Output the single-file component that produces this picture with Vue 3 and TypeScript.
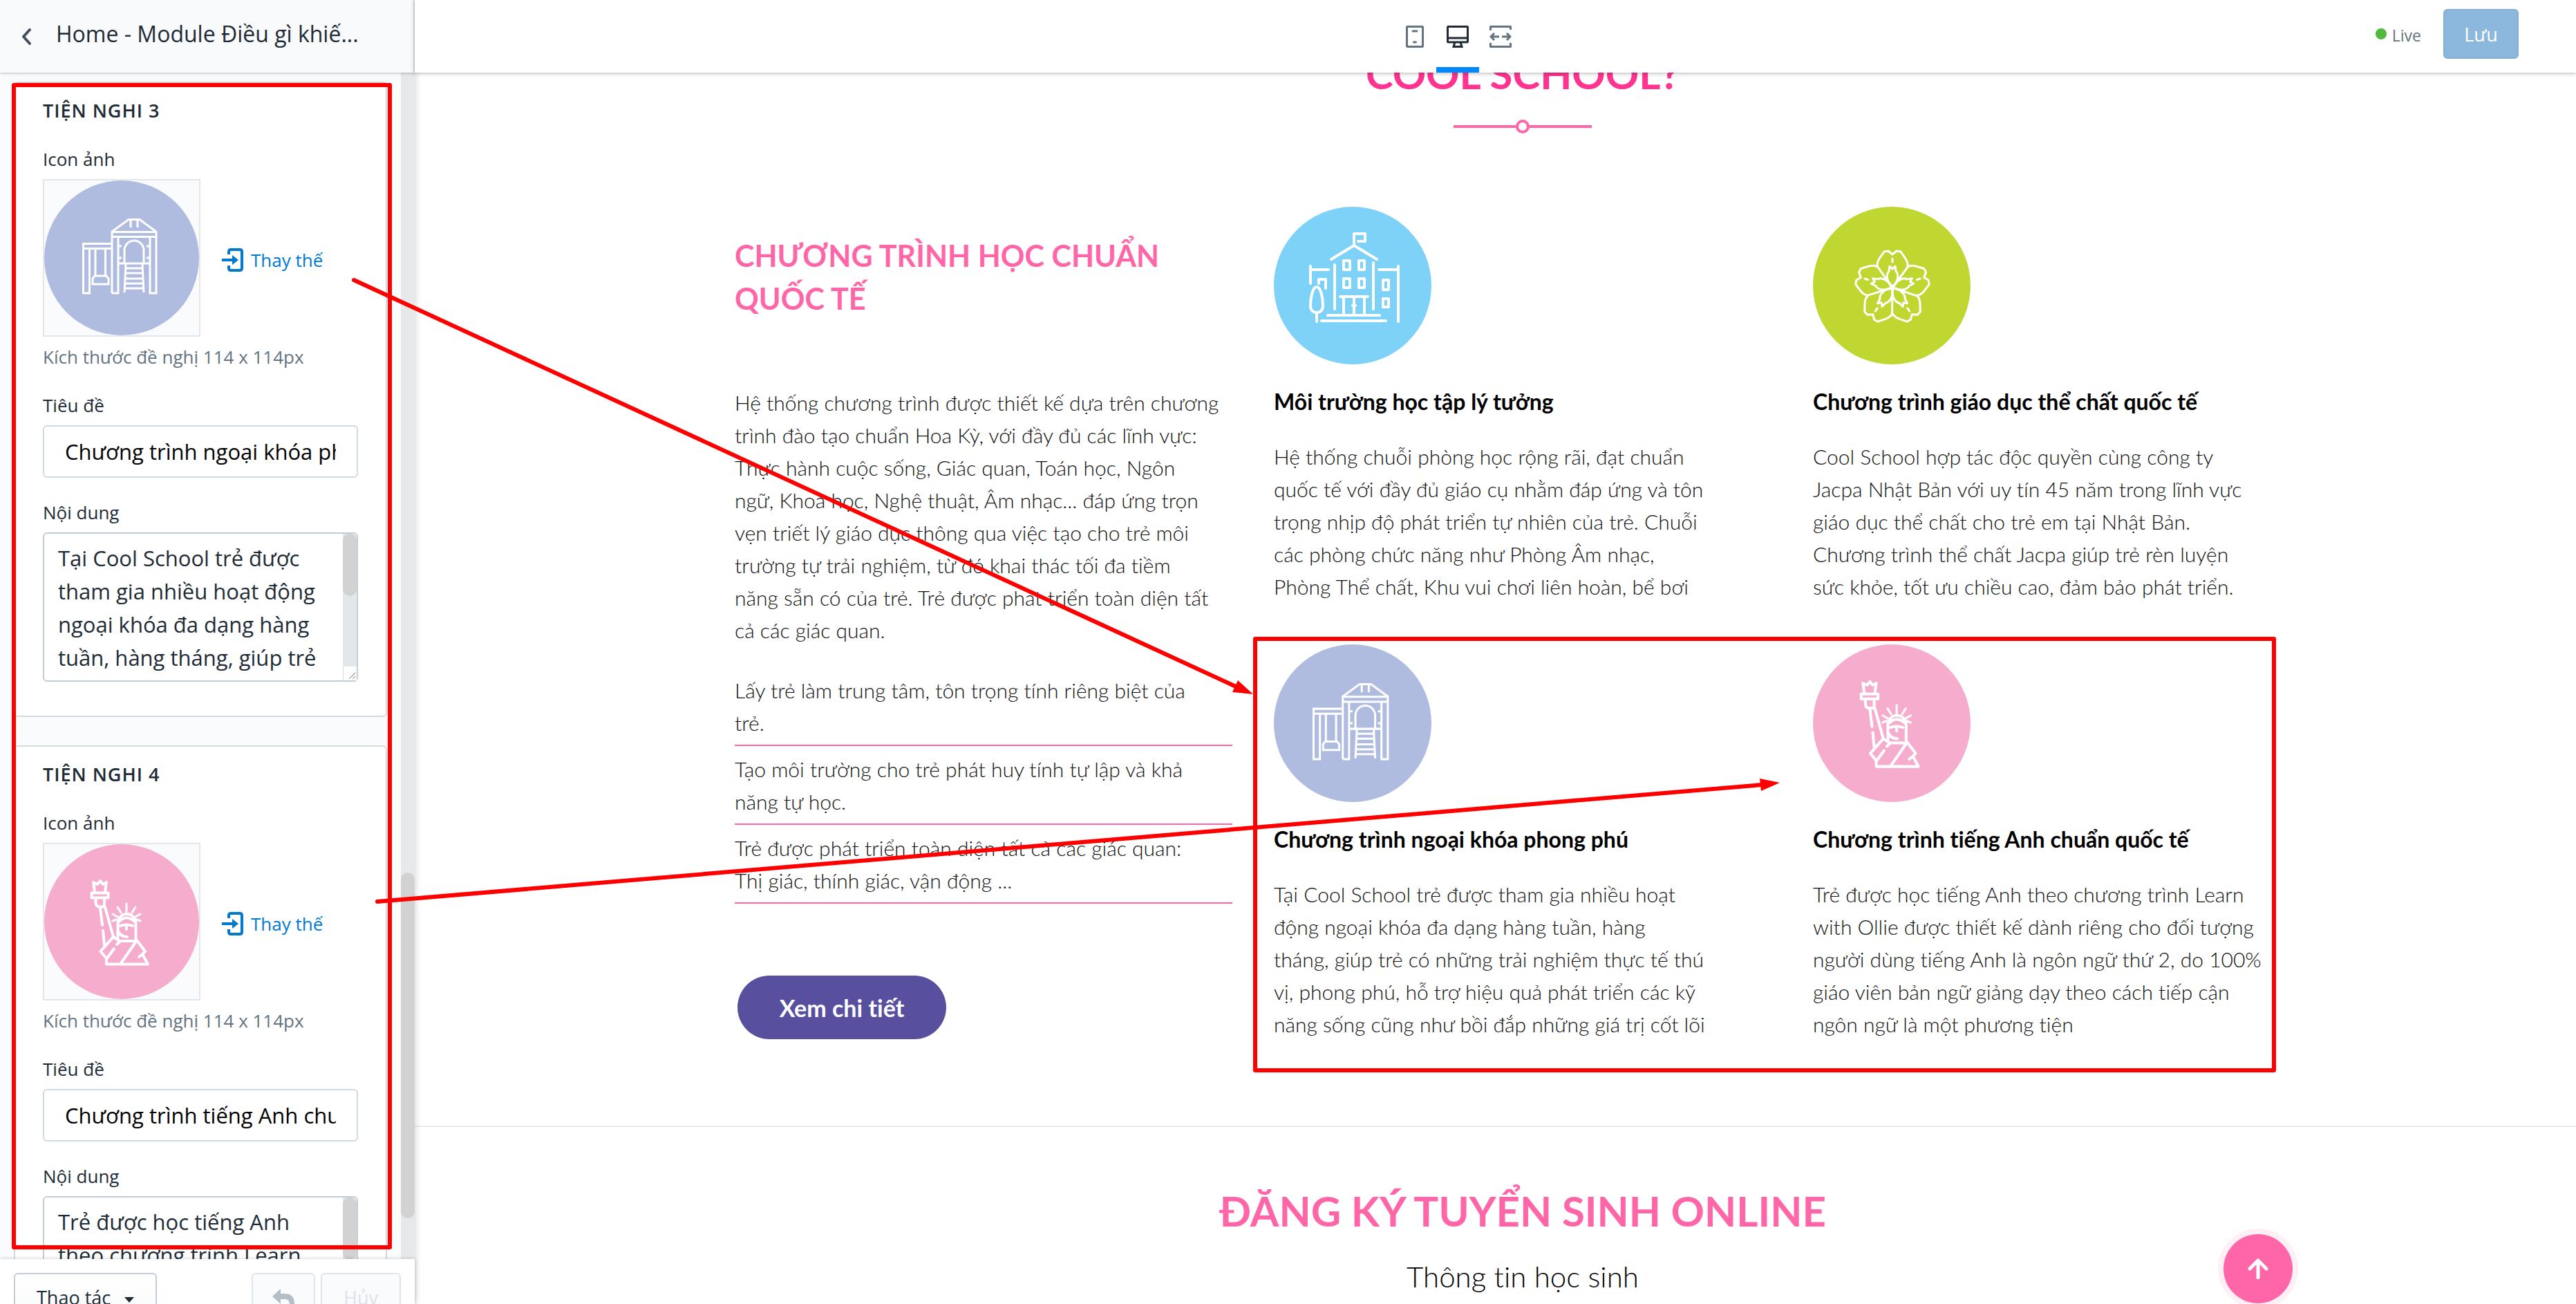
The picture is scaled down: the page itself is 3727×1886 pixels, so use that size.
<script setup lang="ts">
import { ref } from 'vue'

interface Amenity {
  id: number
  heading: string
  icon: string
  title: string
  content: string
}

interface Feature {
  icon: string
  title: string
  text: string
}

const amenities = ref<Amenity[]>([
  {
    id: 3,
    heading: 'TIỆN NGHI 3',
    icon: 'playground',
    title: 'Chương trình ngoại khóa phong phú',
    content:
      'Tại Cool School trẻ được\ntham gia nhiều hoạt động\nngoại khóa đa dạng hàng\ntuần, hàng tháng, giúp trẻ',
  },
  {
    id: 4,
    heading: 'TIỆN NGHI 4',
    icon: 'liberty',
    title: 'Chương trình tiếng Anh chuẩn quốc tế',
    content: 'Trẻ được học tiếng Anh\ntheo chương trình Learn\nwith Ollie được thiết kế',
  },
])

const features: Feature[] = [
  {
    icon: 'school',
    title: 'Môi trường học tập lý tưởng',
    text: 'Hệ thống chuỗi phòng học rộng rãi, đạt chuẩn\nquốc tế với đầy đủ giáo cụ nhằm đáp ứng và tôn\ntrọng nhịp độ phát triển tự nhiên của trẻ. Chuỗi\ncác phòng chức năng như Phòng Âm nhạc,\nPhòng Thể chất, Khu vui chơi liên hoàn, bể bơi',
  },
  {
    icon: 'flower',
    title: 'Chương trình giáo dục thể chất quốc tế',
    text: 'Cool School hợp tác độc quyền cùng công ty\nJacpa Nhật Bản với uy tín 45 năm trong lĩnh vực\ngiáo dục thể chất cho trẻ em tại Nhật Bản.\nChương trình thể chất Jacpa giúp trẻ rèn luyện\nsức khỏe, tốt ưu chiều cao, đảm bảo phát triển.',
  },
  {
    icon: 'playground',
    title: 'Chương trình ngoại khóa phong phú',
    text: 'Tại Cool School trẻ được tham gia nhiều hoạt\nđộng ngoại khóa đa dạng hàng tuần, hàng\ntháng, giúp trẻ có những trải nghiệm thực tế thú\nvị, phong phú, hỗ trợ hiệu quả phát triển các kỹ\nnăng sống cũng như bồi đắp những giá trị cốt lõi',
  },
  {
    icon: 'liberty',
    title: 'Chương trình tiếng Anh chuẩn quốc tế',
    text: 'Trẻ được học tiếng Anh theo chương trình Learn\nwith Ollie được thiết kế dành riêng cho đối tượng\nngười dùng tiếng Anh là ngôn ngữ thứ 2, do 100%\ngiáo viên bản ngữ giảng dạy theo cách tiếp cận\nngôn ngữ là một phương tiện',
  },
]

const intro =
  'Hệ thống chương trình được thiết kế dựa trên chương\ntrình đào tạo chuẩn Hoa Kỳ, với đầy đủ các lĩnh vực:\nThực hành cuộc sống, Giác quan, Toán học, Ngôn\nngữ, Khoa học, Nghệ thuật, Âm nhạc... đáp ứng trọn\nvẹn triết lý giáo dục thông qua việc tạo cho trẻ môi\ntrường tự trải nghiệm, từ đó khai thác tối đa tiềm\nnăng sẵn có của trẻ. Trẻ được phát triển toàn diện tất\ncả các giác quan.'

const goals: string[] = [
  'Lấy trẻ làm trung tâm, tôn trọng tính riêng biệt của\ntrẻ.',
  'Tạo môi trường cho trẻ phát huy tính tự lập và khả\nnăng tự học.',
  'Trẻ được phát triển toàn diện tất cả các giác quan:\nThị giác, thính giác, vận động ...',
]

const petals = [0, 72, 144, 216, 288]
</script>

<template>
  <div class="editor">
    <!-- shared picture symbols -->
    <svg class="defs" aria-hidden="true">
      <symbol id="pic-playground" viewBox="0 0 224 224">
        <circle cx="112" cy="112" r="112" fill="#afbce0" />
        <g fill="none" stroke="#fff" stroke-width="3">
          <path d="M98 163V74L122 56.500H138L162 74V163H153V81M98 163H107V81M98 74.500H162M98 81.500H162M125 56V68M135 56V68" />
          <path d="M98 91.500H56.500V163H65.500V99M57 98.500H98M74 99V137M88.500 99V137M73 138H90L93 142V150H70V142Z" />
          <path d="M116 119V101A14 14 0 0 1 144 101V119M107 120H153M118 121L116 162M142 121L144 162M118 127H142M118 134H142M118 142H142M117 149H143M117 156H143" />
          <path d="M107 95H112M107 112H112M148 95H153M148 112H153" />
        </g>
      </symbol>
      <symbol id="pic-liberty" viewBox="0 0 224 224">
        <circle cx="112" cy="112" r="112" fill="#f5accd" />
        <g fill="none" stroke="#fff" stroke-width="4" stroke-linecap="round" stroke-linejoin="round">
          <path d="M73 69L71 55L77 58L81 53L85 58L90 55L88 69M68.500 70.500H92.500V77.500H68.500ZM74.500 78V85Q75 90 79 90.500H87V78" />
          <path d="M81 92L84 117M85 125L87 146M88 91L100 134L81.500 155L90 165V173.500H150L142 159L146 155L134 139L111 172M142 159L137 163M100 134L109 140H134M110 140L105 145M101 151L90 166" />
          <path d="M106.500 137V114A13 13 0 0 1 132.500 114V138M107 113Q119 100 132 113M110 118Q119 115 128 118M119 118V123M107 126Q111 134 120 134" />
          <path stroke-width="3" d="M119 86V98M106 91L111 99M132 91L127 99M99 101L106 105M139 101L132 105M99 111L104 109M139 111L134 109" />
        </g>
      </symbol>
      <symbol id="pic-school" viewBox="0 0 228 228">
        <circle cx="114" cy="114" r="114" fill="#7fd2f7" />
        <g fill="none" stroke="#fff" stroke-width="4" stroke-linecap="round" stroke-linejoin="round">
          <path d="M116 56V39H132V50H122M83 76L116 56L149 76M88 84V148M144 81V148" />
          <path d="M101 78H110V91H101ZM123 78H131V91H123ZM101 104H110V117H101ZM123 104H131V117H123ZM158 106H166V120H158ZM158 133H166V145H158Z" />
          <path d="M96 130H136M101 130V156M116 130V156M131 130V156M114 143H118M78 157H153M69 165H162" />
          <path d="M53 86V111M53 91H79M152 91H180M180 86V166M65 111V105H75V118" />
          <path d="M62 116C56 116 53 132 53 143C53 150 57 153 62 153C67 153 71 150 71 143C71 132 68 116 62 116ZM62 153V166" />
        </g>
      </symbol>
      <symbol id="pic-flower" viewBox="0 0 228 228">
        <circle cx="114" cy="114" r="114" fill="#bfd730" />
        <g fill="none" stroke="#fff" stroke-width="3" stroke-linecap="round" stroke-linejoin="round">
          <g v-for="angle in petals" :key="angle" :transform="`rotate(${angle} 115 117)`">
            <path d="M115 117L93 86C92 79 97 74 103 65L109 64L115 69L121 64L127 65C133 74 138 79 137 86" />
            <path d="M115 117C107 109 105 98 110 93L111 86L115 90L119 86L120 93C125 98 123 109 115 117M115 75V80" />
          </g>
        </g>
      </symbol>
    </svg>

    <aside class="sidebar">
      <header class="side-head">
        <button class="back" type="button" aria-label="Quay lại">
          <svg width="16" height="26" viewBox="0 0 16 26"><path d="M13 3L4 13L13 23" fill="none" stroke="#454f5b" stroke-width="4" stroke-linecap="round" stroke-linejoin="round" /></svg>
        </button>
        <h1>Home - Module Điều gì khiế...</h1>
      </header>

      <div class="side-body">
        <div class="cards">
          <section v-for="item in amenities" :key="item.id" class="card">
            <h2>{{ item.heading }}</h2>
            <div class="field">
              <span class="label">Icon ảnh</span>
              <div class="picker">
                <div class="thumb"><svg width="224" height="224"><use :href="`#pic-${item.icon}`" /></svg></div>
                <a href="#" class="replace" @click.prevent>
                  <svg width="32" height="34" viewBox="0 0 32 34">
                    <path d="M10 9V5Q10 2 13 2H26Q29 2 29 5V29Q29 32 26 32H13Q10 32 10 29V25" fill="none" stroke="#007ace" stroke-width="4" />
                    <path d="M0 15H15V10L24 17L15 24V19H0Z" fill="#007ace" />
                  </svg>
                  Thay thế
                </a>
              </div>
              <span class="help">Kích thước đề nghị 114 x 114px</span>
            </div>
            <div class="field">
              <label class="label" :for="`title-${item.id}`">Tiêu đề</label>
              <input :id="`title-${item.id}`" v-model="item.title" type="text" />
            </div>
            <div class="field">
              <label class="label" :for="`content-${item.id}`">Nội dung</label>
              <div class="area">
                <textarea :id="`content-${item.id}`" v-model="item.content"></textarea>
                <span class="area-bar"><span class="area-grip"></span></span>
                <svg class="resizer" width="20" height="20" viewBox="0 0 20 20"><path d="M9 18L18 9M14 18L18 14" stroke="#555" stroke-width="1" /></svg>
              </div>
            </div>
          </section>
        </div>
        <div class="track"><div class="grip"></div></div>
      </div>

      <footer class="side-foot">
        <button class="btn" type="button">
          Thao tác
          <svg width="14" height="8" viewBox="0 0 14 8"><path d="M0 0H14L7 8Z" fill="#212b36" /></svg>
        </button>
        <span class="spacer"></span>
        <button class="btn undo off" type="button" disabled aria-label="Hoàn tác">
          <svg width="32" height="32" viewBox="0 0 32 32"><path d="M0 11L12 0V7H18Q32 7 32 22V32H25V23Q25 15 18 15H12V22Z" fill="#b4bec9" /></svg>
        </button>
        <button class="btn off" type="button" disabled>Hủy</button>
      </footer>
    </aside>

    <div class="stage">
      <header class="topbar">
        <nav class="devices">
          <button type="button" aria-label="Di động">
            <svg width="32" height="32" viewBox="0 0 32 32" fill="none" stroke="#637381" stroke-width="3"><rect x="4.500" y="1.500" width="23" height="29" rx="1" /><path d="M13 8H19M14.500 24H17.500" stroke-linecap="round" /></svg>
          </button>
          <button class="active" type="button" aria-label="Máy tính">
            <svg width="32" height="32" viewBox="0 0 32 32" fill="none" stroke="#212b36" stroke-width="3"><rect x="1.500" y="1.500" width="29" height="22.500" rx="1" /><path d="M2 18H30M12 24L10 30.500H22L20 24" /></svg>
          </button>
          <button type="button" aria-label="Toàn màn hình">
            <svg width="32" height="32" viewBox="0 0 32 32" fill="none" stroke="#637381" stroke-width="3" stroke-linejoin="round"><path d="M1.500 7V1.500H30.500V6M1.500 25V30.500H30.500V25M14 16H2M7 11L2 16L7 21M18 16H30M25 11L30 16L25 21" /></svg>
          </button>
        </nav>
        <div class="status">
          <span class="dot"></span>
          <span class="live">Live</span>
          <button class="save" type="button" disabled>Lưu</button>
        </div>
      </header>

      <main class="preview">
        <div class="page">
          <h2 class="title first">COOL SCHOOL?</h2>
          <div class="ornament"><span class="ring"></span></div>

          <div class="columns">
            <section class="intro">
              <h3>CHƯƠNG TRÌNH HỌC CHUẨN<br />QUỐC TẾ</h3>
              <p>{{ intro }}</p>
              <ul>
                <li v-for="goal in goals" :key="goal">{{ goal }}</li>
              </ul>
              <button class="more" type="button">Xem chi tiết</button>
            </section>
            <div class="features">
              <article v-for="feature in features" :key="feature.title">
                <svg width="228" height="228"><use :href="`#pic-${feature.icon}`" /></svg>
                <h4>{{ feature.title }}</h4>
                <p>{{ feature.text }}</p>
              </article>
            </div>
          </div>

          <section class="signup">
            <h2 class="title">ĐĂNG KÝ TUYỂN SINH ONLINE</h2>
            <p>Thông tin học sinh</p>
          </section>
        </div>
        <button class="to-top" type="button" aria-label="Lên đầu trang">
          <svg width="30" height="30" viewBox="0 0 30 30"><path d="M15 28V3M3 15L15 3L27 15" fill="none" stroke="#fff" stroke-width="5" stroke-linecap="round" stroke-linejoin="round" /></svg>
        </button>
      </main>
    </div>

    <!-- marker boxes and arrows drawn over the whole editor -->
    <svg class="marks" width="3727" height="1886" viewBox="0 0 3727 1886" aria-hidden="true">
      <g fill="none" stroke="#f00" stroke-width="6" stroke-linecap="round" stroke-linejoin="round">
        <rect x="20" y="123" width="544" height="1681" />
        <rect x="1816" y="924" width="1474" height="624" />
        <path d="M512 405L1788 993M546 1304L2550 1135" />
      </g>
      <path d="M1813 1004L1791 984L1783 1001ZM2575 1132L2546 1126L2548 1144Z" fill="#f00" />
    </svg>
  </div>
</template>

<style>
body {
  margin: 0;
  overflow: hidden;
}
</style>

<style scoped>
.editor {
  position: relative;
  display: flex;
  height: 100vh;
  overflow: hidden;
  background: #fff;
  font-family: "Open Sans", "Noto Sans", sans-serif;
  color: #212b36;
}
.editor *,
.editor *::before {
  box-sizing: border-box;
}
.defs {
  position: absolute;
  width: 0;
  height: 0;
}
h1,
h2,
h3,
h4,
p,
ul {
  margin: 0;
  padding: 0;
}
button,
input,
textarea {
  font: inherit;
  color: inherit;
}
svg {
  display: block;
  flex: none;
}

/* sidebar */
.sidebar {
  display: flex;
  flex: none;
  flex-direction: column;
  width: 600px;
  background: #fafbfc;
  box-shadow: 0 0 10px rgba(0, 0, 0, 0.2);
  z-index: 1;
}
.side-head {
  display: flex;
  flex: none;
  align-items: center;
  height: 105px;
  padding: 0 30px 8px;
  border-right: 2px solid #dfe3e8;
  background: #f9fafc;
  box-shadow: 0 1px 4px rgba(0, 0, 0, 0.25);
  z-index: 1;
}
.back {
  margin: 8px 0 0;
  padding: 0;
  border: 0;
  background: none;
}
.side-head h1 {
  margin-left: 35px;
  font-size: 32px;
  line-height: 48px;
  font-weight: 500;
  white-space: nowrap;
}
.side-body {
  display: flex;
  flex: 1;
  min-height: 0;
  overflow: hidden;
}
.cards {
  display: flex;
  flex: 1;
  flex-direction: column;
  gap: 41px;
  padding: 13px 20px 0;
}
.card {
  flex: none;
  padding: 20px 40px 49px;
  border: 2px solid #d3dbe2;
  border-radius: 6px;
  background: #fff;
}
.card h2 {
  font-size: 27px;
  line-height: 40px;
  font-weight: 600;
  letter-spacing: 1px;
}
.field {
  display: flex;
  flex-direction: column;
  gap: 9px;
  margin-top: 30px;
}
.label,
.help {
  font-size: 26px;
  line-height: 40px;
}
.help {
  color: #637381;
}
.picker {
  display: flex;
  align-items: center;
  gap: 31px;
}
.thumb {
  border: 2px solid #e4e7e9;
  background: #fafbfc;
}
.replace {
  display: flex;
  align-items: center;
  gap: 10px;
  margin-top: 6px;
  color: #007ace;
  font-size: 26px;
  line-height: 40px;
  text-decoration: none;
  white-space: nowrap;
}
.card input {
  width: 456px;
  height: 76px;
  padding: 0 30px;
  border: 2px solid #d3dbe2;
  border-radius: 6px;
  background: #fff;
  color: #000;
  font-size: 31px;
}
.area {
  position: relative;
  height: 216px;
}
.area textarea {
  display: block;
  width: 100%;
  height: 100%;
  padding: 11px 20px;
  border: 2px solid #c4cdd5;
  border-radius: 6px;
  overflow: hidden;
  resize: none;
  font-size: 31px;
  line-height: 48px;
  white-space: pre;
}
.area-bar {
  position: absolute;
  top: 2px;
  right: 2px;
  bottom: 22px;
  width: 20px;
  background: #e4e7e9;
}
.area-grip {
  display: block;
  height: 90px;
  border-radius: 10px;
  background: #d2d2d2;
}
.resizer {
  position: absolute;
  right: 2px;
  bottom: 2px;
  border-left: 1px solid #d9d9d9;
  background: #fff;
}
.track {
  width: 20px;
  padding-top: 1157px;
  background: #e6e8ea;
}
.grip {
  height: 500px;
  border-radius: 10px;
  background: #d2d2d2;
}
.side-foot {
  display: flex;
  flex: none;
  align-items: flex-start;
  gap: 8px;
  height: 65px;
  padding: 20px 20px 0;
  overflow: hidden;
  background: #fff;
  box-shadow: 0 0 6px rgba(0, 0, 0, 0.2);
  z-index: 1;
}
.spacer {
  flex: 1;
}
.btn {
  display: flex;
  flex: none;
  align-items: center;
  gap: 20px;
  height: 72px;
  padding: 0 31px;
  border: 2px solid #c4cdd5;
  border-radius: 6px;
  background: linear-gradient(#fff, #f9fafb);
  font-size: 27px;
  line-height: 40px;
}
.btn svg {
  margin-top: 6px;
}
.btn.off {
  border-color: #e0e5ea;
  background: #fafbfc;
  color: #dce3ea;
}
.btn.undo {
  padding: 0 28px;
}

/* stage */
.stage {
  display: flex;
  flex: 1;
  flex-direction: column;
  min-width: 0;
}
.topbar {
  position: relative;
  display: grid;
  grid-template-columns: 1fr auto 1fr;
  flex: none;
  align-items: center;
  height: 105px;
  padding-right: 83px;
  background: #fff;
  box-shadow: 0 1px 6px rgba(0, 0, 0, 0.3);
  z-index: 1;
}
.devices {
  display: flex;
  grid-column: 2;
  height: 105px;
  padding-right: 26px;
}
.devices button {
  display: flex;
  align-items: center;
  justify-content: center;
  width: 62px;
  padding: 0;
  border: 0;
  background: none;
}
.devices .active {
  padding-top: 8px;
  border-bottom: 8px solid #0088ff;
}
.status {
  display: flex;
  align-items: center;
  align-self: start;
  justify-content: flex-end;
  height: 98px;
}
.dot {
  width: 16px;
  height: 16px;
  border-radius: 50%;
  background: #50b83c;
}
.live {
  margin: 4px 32px 0 8px;
  color: #637381;
  font-size: 23px;
  line-height: 32px;
}
.save {
  width: 109px;
  height: 72px;
  padding: 0;
  border: 2px solid #84aed6;
  border-radius: 6px;
  background: #8cb8de;
  color: #fff;
  font-size: 27px;
}
.preview {
  position: relative;
  flex: 1;
  min-height: 0;
  overflow: hidden;
  background: #fff;
  font-family: Lato, "Open Sans", sans-serif;
  font-variant-ligatures: none;
}
.page {
  margin-right: -79px;
}
.title {
  color: #ff66a8;
  font-size: 60px;
  line-height: 72px;
  font-weight: 700;
  text-align: center;
}
.title.first {
  margin-top: -35px;
  color: #ff3490;
}
.ornament {
  display: flex;
  align-items: center;
  justify-content: center;
  width: 200px;
  height: 20px;
  margin: 31px auto 106px;
  background: linear-gradient(#ff66a8, #ff66a8) center / 100% 4px no-repeat;
}
.ring {
  width: 20px;
  height: 20px;
  border: 4px solid #ff66a8;
  border-radius: 50%;
  background: #fff;
}
.columns {
  display: flex;
  gap: 60px;
  width: 2280px;
  margin: 0 auto;
}
.intro {
  width: 720px;
}
.intro h3 {
  margin-top: 40px;
  color: #ff66a8;
  font-size: 43px;
  line-height: 62px;
  font-weight: 700;
}
.intro p,
.intro li,
.features p {
  color: #111;
  font-size: 30px;
  line-height: 47px;
  font-weight: 300;
  white-space: pre;
}
.intro p {
  margin-top: 96px;
}
.intro ul {
  margin-top: 40px;
  list-style: none;
}
.intro li {
  margin-bottom: 10px;
  padding-bottom: 8px;
  border-bottom: 2px solid #ff66a8;
}
.more {
  display: block;
  width: 302px;
  height: 92px;
  margin: 104px 0 0 4px;
  border: 0;
  border-radius: 46px;
  background: #58509e;
  color: #fff;
  font-size: 34px;
  font-weight: 700;
}
.features {
  display: grid;
  flex: 1;
  grid-template-columns: 1fr 1fr;
  align-content: start;
  gap: 60px;
}
.features h4 {
  margin-top: 34px;
  color: #000;
  font-size: 32px;
  line-height: 40px;
  font-weight: 700;
  white-space: nowrap;
}
.features p {
  margin-top: 36px;
}
.signup {
  margin-top: 123px;
  padding-top: 85px;
  border-top: 2px solid #ebebeb;
}
.signup p {
  margin-top: 29px;
  color: #000;
  font-size: 42px;
  line-height: 60px;
  font-weight: 300;
  text-align: center;
}
.to-top {
  position: absolute;
  right: 410px;
  bottom: 1px;
  display: flex;
  align-items: center;
  justify-content: center;
  width: 100px;
  height: 100px;
  padding: 0;
  border: 0;
  border-radius: 50%;
  background: #ff66a8;
  box-shadow: 0 0 0 8px #fff0f6;
}
.marks {
  position: absolute;
  top: 0;
  left: 0;
  pointer-events: none;
  z-index: 2;
}
</style>
